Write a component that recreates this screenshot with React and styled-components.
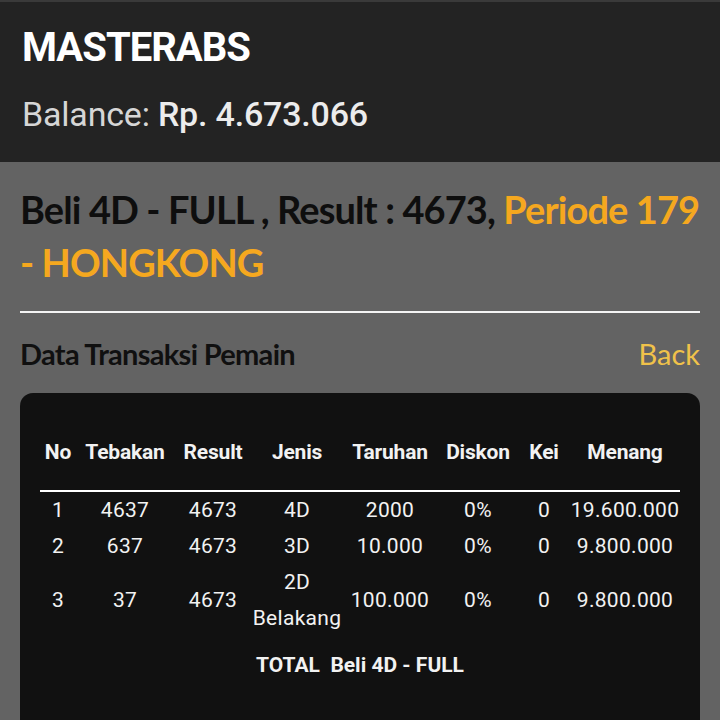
import styled, { createGlobalStyle } from "styled-components";

const GlobalStyle = createGlobalStyle`
  html, body {
    margin: 0;
    padding: 0;
    background: #636363;
  }
  body {
    font-family: Roboto, "Liberation Sans", sans-serif;
  }
`;

const Page = styled.div`
  width: 720px;
  min-height: 720px;
  background: #636363;
  overflow: hidden;
`;

const Header = styled.header`
  background: #232323;
  border-top: 2px solid #3a3a3a;
  padding: 22px 22px 28px;
  display: flex;
  flex-direction: column;
  gap: 22px;
`;

const Brand = styled.h1`
  margin: 0;
  font-size: 40px;
  line-height: 48px;
  font-weight: 700;
  letter-spacing: -1px;
  color: #ffffff;
`;

const Balance = styled.div`
  font-size: 34px;
  line-height: 40px;
  color: #d6d6d6;
  letter-spacing: -0.2px;

  strong {
    font-weight: 500;
    color: #ececec;
  }
`;

const Content = styled.main`
  padding: 21px 20px 0;
`;

const Title = styled.h2`
  margin: 0;
  font-family: Lato, "Open Sans", sans-serif;
  font-size: 38px;
  line-height: 53px;
  font-weight: 700;
  letter-spacing: -0.9px;
  color: #0e0e0e;
`;

const Highlight = styled.span`
  color: #f5a81f;
`;

const Rule = styled.hr`
  margin: 22px 0 0;
  border: 0;
  height: 2px;
  background: #f4f4f4;
`;

const SectionRow = styled.div`
  display: flex;
  justify-content: space-between;
  align-items: center;
  height: 80px;
`;

const SectionTitle = styled.div`
  font-family: Lato, "Open Sans", sans-serif;
  font-size: 29px;
  font-weight: 700;
  letter-spacing: -0.7px;
  color: #101010;
`;

const BackLink = styled.a`
  font-family: Lato, "Open Sans", sans-serif;
  font-size: 29px;
  color: #f0c24a;
  cursor: pointer;
`;

const Card = styled.section`
  background: #111111;
  border-radius: 13px;
  padding: 47px 20px 60px;
`;

const Table = styled.table`
  width: 640px;
  table-layout: fixed;
  border-collapse: collapse;
  color: #f2f2f2;
  font-size: 21px;
`;

const Th = styled.th`
  font-weight: 700;
  line-height: 24px;
  padding: 0 0 26px;
  text-align: center;
  border-bottom: 2px solid #ffffff;
  white-space: nowrap;
  letter-spacing: -0.2px;
`;

const Td = styled.td`
  line-height: 36px;
  padding: 0;
  text-align: center;
  vertical-align: middle;
  letter-spacing: 0.3px;
`;

const TotalCell = styled.td`
  text-align: center;
  font-weight: 700;
  line-height: 58px;
  padding: 0;
`;

const columns = [
  { label: "No", width: 36 },
  { label: "Tebakan", width: 98 },
  { label: "Result", width: 78 },
  { label: "Jenis", width: 90 },
  { label: "Taruhan", width: 96 },
  { label: "Diskon", width: 80 },
  { label: "Kei", width: 52 },
  { label: "Menang", width: 110 },
];

const rows = [
  ["1", "4637", "4673", "4D", "2000", "0%", "0", "19.600.000"],
  ["2", "637", "4673", "3D", "10.000", "0%", "0", "9.800.000"],
  ["3", "37", "4673", "2D Belakang", "100.000", "0%", "0", "9.800.000"],
];

export default function App() {
  return (
    <Page>
      <GlobalStyle />
      <Header>
        <Brand>MASTERABS</Brand>
        <Balance>
          Balance: <strong>Rp. 4.673.066</strong>
        </Balance>
      </Header>
      <Content>
        <Title>
          Beli 4D - FULL , Result : 4673,{" "}
          <Highlight>
            Periode 179
            <br />- HONGKONG
          </Highlight>
        </Title>
        <Rule />
        <SectionRow>
          <SectionTitle>Data Transaksi Pemain</SectionTitle>
          <BackLink>Back</BackLink>
        </SectionRow>
        <Card>
          <Table>
            <colgroup>
              {columns.map((c) => (
                <col key={c.label} style={{ width: c.width }} />
              ))}
            </colgroup>
            <thead>
              <tr>
                {columns.map((c) => (
                  <Th key={c.label}>{c.label}</Th>
                ))}
              </tr>
            </thead>
            <tbody>
              {rows.map((r) => (
                <tr key={r[0]}>
                  {r.map((v, i) => (
                    <Td key={i}>{v}</Td>
                  ))}
                </tr>
              ))}
              <tr>
                <TotalCell colSpan={8}>TOTAL&nbsp; Beli 4D - FULL</TotalCell>
              </tr>
            </tbody>
          </Table>
        </Card>
      </Content>
    </Page>
  );
}
